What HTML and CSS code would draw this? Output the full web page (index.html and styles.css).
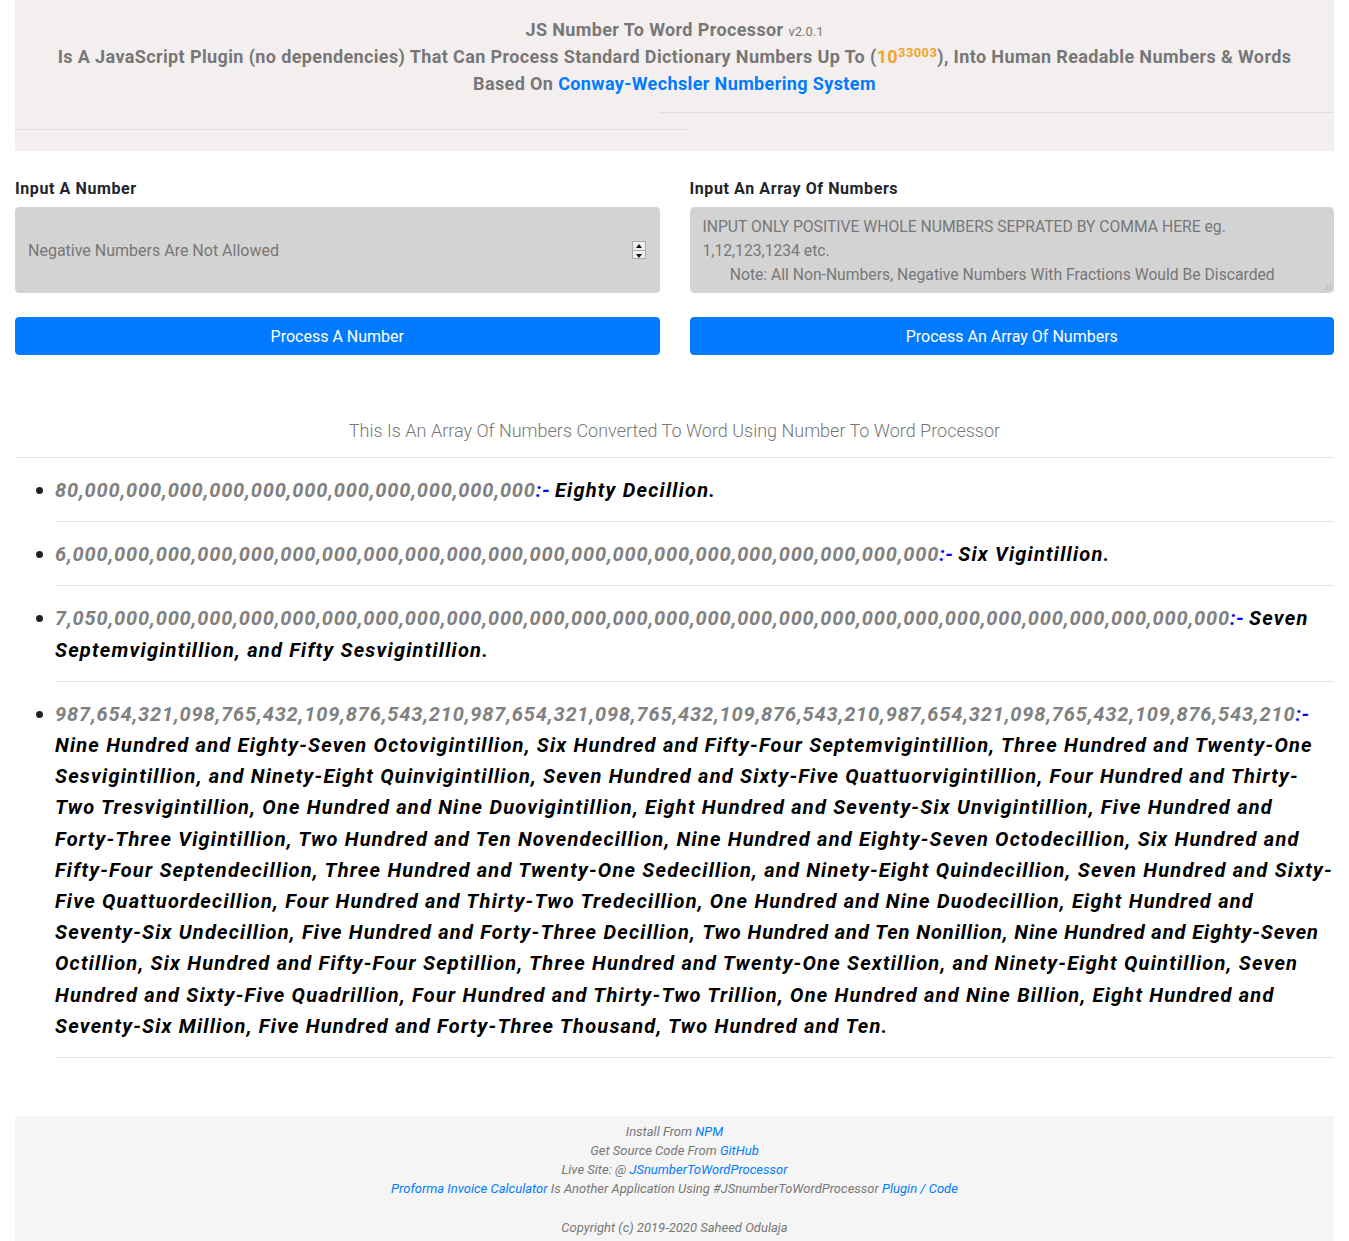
FILE: index.html
```html
<!DOCTYPE html>
<html lang="en">
<head>
<meta charset="utf-8">
<title>JS Number To Word Processor</title>
<link rel="stylesheet" href="styles.css">
</head>
<body>
<div class="page">
  <header class="hero">
    <p class="hero-title">JS Number To Word Processor <small class="ver">v2.0.1</small></p>
    <p class="hero-line">Is A JavaScript Plugin (no dependencies) That Can Process Standard Dictionary Numbers Up To (<span class="pow">10<sup>33003</sup></span>), Into Human Readable Numbers &amp; Words</p>
    <p class="hero-line">Based On <a href="#" class="link">Conway-Wechsler Numbering System</a></p>
    <hr class="hr-right">
    <hr class="hr-left">
  </header>

  <section class="inputs">
    <div class="col">
      <label class="lbl">Input A Number</label>
      <div class="field-wrap">
        <input class="field" type="text" placeholder="Negative Numbers Are Not Allowed">
        <span class="spin"><span class="spin-up"></span><span class="spin-down"></span></span>
      </div>
      <button class="btn">Process A Number</button>
    </div>
    <div class="col">
      <label class="lbl">Input An Array Of Numbers</label>
      <div class="field-wrap grip">
        <textarea class="field area" placeholder="INPUT ONLY POSITIVE WHOLE NUMBERS SEPRATED BY COMMA HERE eg.&#10;1,12,123,1234 etc.&#10;       Note: All Non-Numbers, Negative Numbers With Fractions Would Be Discarded"></textarea>
      </div>
      <button class="btn">Process An Array Of Numbers</button>
    </div>
  </section>

  <p class="caption">This Is An Array Of Numbers Converted To Word Using Number To Word Processor</p>
  <hr class="rule">

  <ul class="results">
    <li><span class="num">80,000,000,000,000,000,000,000,000,000,000,000</span><span class="sep">:-</span> <span class="word">Eighty Decillion.</span></li>
    <li><span class="num">6,000,000,000,000,000,000,000,000,000,000,000,000,000,000,000,000,000,000,000,000,000</span><span class="sep">:-</span> <span class="word">Six Vigintillion.</span></li>
    <li><span class="num">7,050,000,000,000,000,000,000,000,000,000,000,000,000,000,000,000,000,000,000,000,000,000,000,000,000,000,000,000</span><span class="sep">:-</span> <span class="word">Seven Septemvigintillion, and Fifty Sesvigintillion.</span></li>
    <li><span class="num">987,654,321,098,765,432,109,876,543,210,987,654,321,098,765,432,109,876,543,210,987,654,321,098,765,432,109,876,543,210</span><span class="sep">:-</span> <span class="word">Nine Hundred and Eighty-Seven Octovigintillion, Six Hundred and Fifty-Four Septemvigintillion, Three Hundred and Twenty-One Sesvigintillion, and Ninety-Eight Quinvigintillion, Seven Hundred and Sixty-Five Quattuorvigintillion, Four Hundred and Thirty-Two Tresvigintillion, One Hundred and Nine Duovigintillion, Eight Hundred and Seventy-Six Unvigintillion, Five Hundred and Forty-Three Vigintillion, Two Hundred and Ten Novendecillion, Nine Hundred and Eighty-Seven Octodecillion, Six Hundred and Fifty-Four Septendecillion, Three Hundred and Twenty-One Sedecillion, and Ninety-Eight Quindecillion, Seven Hundred and Sixty-Five Quattuordecillion, Four Hundred and Thirty-Two Tredecillion, One Hundred and Nine Duodecillion, Eight Hundred and Seventy-Six Undecillion, Five Hundred and Forty-Three Decillion, <span class="tight">Two Hundred and Ten Nonillion, Nine Hundred and Eighty-Seven</span> Octillion, Six Hundred and Fifty-Four Septillion, Three Hundred and Twenty-One Sextillion, and Ninety-Eight Quintillion, Seven Hundred and Sixty-Five Quadrillion, Four Hundred and Thirty-Two Trillion, One Hundred and Nine Billion, Eight Hundred and Seventy-Six Million, Five Hundred and Forty-Three Thousand, Two Hundred and Ten.</span></li>
  </ul>

  <footer class="foot">
    <p>Install From <a href="#" class="link">NPM</a></p>
    <p>Get Source Code From <a href="#" class="link">GitHub</a></p>
    <p>Live Site: @ <a href="#" class="link">JSnumberToWordProcessor</a></p>
    <p><a href="#" class="link">Proforma Invoice Calculator</a> Is Another Application Using #JSnumberToWordProcessor <a href="#" class="link">Plugin / Code</a></p>
    <p class="copy">Copyright (c) 2019-2020 Saheed Odulaja</p>
  </footer>
</div>
</body>
</html>
```
FILE: styles.css
```css
* { box-sizing: border-box; }
html, body { margin: 0; padding: 0; background: #fff; }
body { font-family: Roboto, "Liberation Sans", Arial, sans-serif; color: #212529; }
.page { padding: 0 15px; }

.hero { background: #f4efef; padding: 16px 0 21px; text-align: center; color: #777; font-weight: 700; letter-spacing: 0.38px; }
.hero p { margin: 0; }
.hero-title { font-size: 18px; line-height: 27px; }
.ver { font-size: 13px; font-weight: 400; line-height: 0; letter-spacing: 0; }
.hero-line { font-size: 18px; line-height: 27px; }
.pow { color: #f0a52a; }
.pow sup { font-size: 13px; vertical-align: 6px; line-height: 0; }
.link { color: #007bff; text-decoration: none; }
.hr-right { border: 0; border-top: 1px solid #ddd; margin: 15px 0 0 auto; width: 674px; }
.hr-left { border: 0; border-top: 1px solid #ddd; margin: 16px 0 0 0; width: 675px; }

.inputs { display: grid; grid-template-columns: 1fr 1fr; gap: 30px; padding-top: 28px; }
.col { display: flex; flex-direction: column; }
.lbl { font-size: 16px; font-weight: 700; line-height: 20px; margin-bottom: 8px; color: #212529; letter-spacing: 0.6px; }
.field-wrap { position: relative; }
.field { display: block; width: 100%; height: 86px; background: #d3d3d3; border: 1px solid #d3d3d3; border-radius: 4px; font-family: inherit; font-size: 16px; color: #495057; padding: 0 12px; outline: none; }
.field::placeholder { color: #777; opacity: 1; }
.area { padding: 7px 12px; line-height: 24px; resize: none; font-size: 15.7px; }
.grip::after { content: ""; position: absolute; right: 3px; bottom: 3px; width: 8px; height: 8px; background-image: radial-gradient(circle, #b5b5b5 0.9px, transparent 1.1px); background-size: 3px 3px; clip-path: polygon(100% 0, 100% 100%, 0 100%); }
.spin { position: absolute; right: 14px; top: 34px; width: 14px; height: 18px; background: #eee; border: 1px solid #aaa; display: flex; flex-direction: column; }
.spin-up, .spin-down { flex: 1; position: relative; }
.spin-up { border-bottom: 1px solid #aaa; }
.spin-up::after { content: ""; position: absolute; left: 3px; top: 2px; border: 3px solid transparent; border-bottom: 4px solid #111; border-top: 0; }
.spin-down::after { content: ""; position: absolute; left: 3px; top: 3px; border: 3px solid transparent; border-top: 4px solid #111; border-bottom: 0; }
.btn { margin-top: 24px; height: 38px; background: #007bff; color: #fff; border: 1px solid #007bff; border-radius: 4px; font-family: inherit; font-size: 16px; }

.caption { margin: 64px 0 0; text-align: center; font-size: 18px; font-weight: 300; color: #777; line-height: 24px; }
.rule { border: 0; border-top: 1px solid #e5e5e5; margin: 14px 0 0; }

.results { margin: 0; padding: 0 0 0 40px; list-style: none; }
.results li { position: relative; padding: 17px 0 15px; border-bottom: 1px solid #e5e5e5; font-size: 20px; line-height: 31.2px; font-weight: 700; font-style: italic; color: #000; }
.results li::before { content: ""; position: absolute; left: -19px; top: 29px; width: 7px; height: 7px; border-radius: 50%; background: #222; }
.num { color: #808080; letter-spacing: 0.84px; }
.sep { color: #0000ff; letter-spacing: 0.5px; }
.word { color: #000; letter-spacing: 1.22px; }
.word .tight { letter-spacing: 0.95px; }

.foot { margin-top: 58px; background: #f5f5f5; text-align: center; font-size: 13px; font-style: italic; color: #777; padding: 6px 0 20px; }
.foot p { margin: 0; line-height: 19px; }
.foot .copy { margin-top: 20px; }
```
